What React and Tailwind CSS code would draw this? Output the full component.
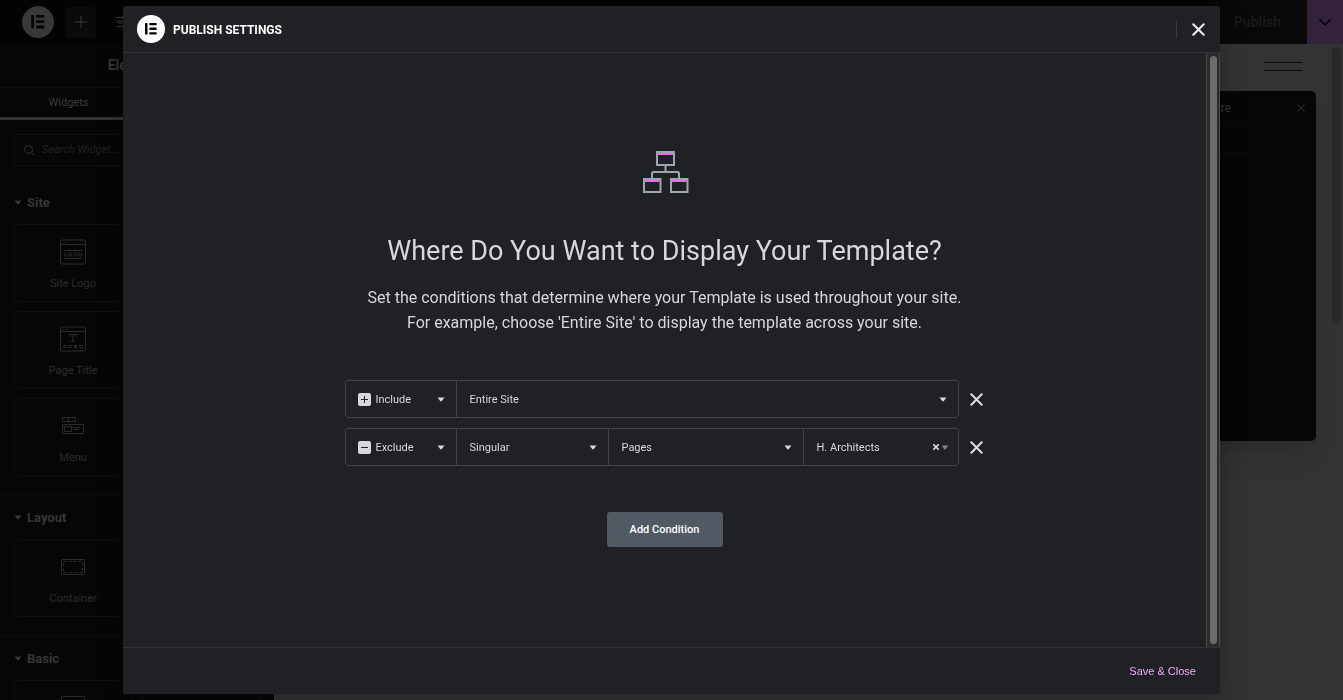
import { useState } from 'react';

// Widget glyphs for the left panel
function LogoWidgetIcon() {
  return (
    <svg width="26" height="26" viewBox="0 0 26 26" fill="none" stroke="currentColor">
      <rect x="0.5" y="1" width="25" height="24" rx="2" />
      <path d="M0.5 5.5h25M2.5 3.5h1M5 3.5h1M7 3.5h1M4 11.5h18M4 19.5h18" />
      <path d="M5 13.5v3.5h2.5" />
      <circle cx="10" cy="15.5" r="1.75" />
      <path d="M16.500 14a1.750 1.750 0 1 0 .3 2.500v-1h-1" />
      <circle cx="20" cy="15.5" r="1.75" />
    </svg>
  );
}

function TitleWidgetIcon() {
  return (
    <svg width="26" height="26" viewBox="0 0 26 26" fill="none" stroke="currentColor">
      <rect x="0.5" y="1" width="25" height="24" rx="2" />
      <path d="M0.5 5.5h25M2.5 3.5h1M5 3.5h1M7 3.5h1" />
      <path d="M9.500 10.500v-2h7v2M13 8.500v7M11 15.500h4" />
      <path d="M8 19.500h4M8 21.500h4M19 19.500h4M19 21.500h4" />
      <rect x="4" y="19.5" width="2" height="2" />
      <rect x="14.5" y="19.5" width="2" height="2" />
    </svg>
  );
}

function MenuWidgetIcon() {
  return (
    <svg width="26" height="26" viewBox="0 0 26 26" fill="none" stroke="currentColor">
      <path d="M2.500 4.500h13v4h-13zM8.500 4.500v4M2.500 11.500h21v9h-21z" />
      <path d="M4.500 13.500h7v5h-7zM13.500 14.500h7M13.500 16.500h5" />
    </svg>
  );
}

function ContainerIcon() {
  return (
    <svg width="26" height="26" viewBox="0 0 26 26" fill="none" stroke="currentColor">
      <rect x="1.5" y="5.5" width="23" height="15" rx="1" />
      <rect x="3.5" y="7.5" width="19" height="11" strokeDasharray="3 2" />
    </svg>
  );
}

function HeadingIcon() {
  return (
    <svg width="26" height="26" viewBox="0 0 26 26" fill="none" stroke="currentColor">
      <rect x="1.5" y="1.5" width="23" height="23" rx="1" />
      <path d="M9 8v10M17 8v10M9 13h8" />
    </svg>
  );
}

const SECTIONS = [
  {
    title: 'Site',
    widgets: [
      { id: 'site-logo', label: 'Site Logo', Icon: LogoWidgetIcon },
      { id: 'page-title', label: 'Page Title', Icon: TitleWidgetIcon },
      { id: 'menu', label: 'Menu', Icon: MenuWidgetIcon },
    ],
  },
  { title: 'Layout', widgets: [{ id: 'container', label: 'Container', Icon: ContainerIcon }] },
  { title: 'Basic', widgets: [{ id: 'heading', Icon: HeadingIcon }] },
];

function ElementorMark({ className }) {
  return (
    <svg viewBox="0 0 32 32" className={className} aria-hidden="true">
      <circle cx="16" cy="16" r="16" fill="currentColor" />
      <path
        className="fill-[#050505]"
        d="M9.200 9h2.800v13.400H9.200zM14.200 9h8.200v2.800h-8.200zM14.200 14.300h8.200v2.800h-8.200zM14.200 19.600h8.200v2.800h-8.200z"
      />
    </svg>
  );
}

function Caret({ className = '' }) {
  return (
    <svg viewBox="0 0 8 5" className={`h-[5px] w-2 ${className}`} aria-hidden="true">
      <path d="M0.500 0.500h7L4.400 4.400q-.400.400-.800 0z" fill="currentColor" />
    </svg>
  );
}

function Cross({ className = '', strokeWidth = 2 }) {
  return (
    <svg
      viewBox="0 0 12 12"
      className={className}
      fill="none"
      stroke="currentColor"
      strokeWidth={strokeWidth}
      strokeLinecap="round"
      aria-hidden="true"
    >
      <path d="M1.200 1.200l9.600 9.600M10.800 1.200L1.200 10.800" />
    </svg>
  );
}

function TopBar() {
  return (
    <header className="flex h-11 shrink-0 items-stretch justify-between bg-[#020303]">
      <div className="flex items-center pl-[22px] text-[#383838]">
        <button aria-label="Elementor menu">
          <ElementorMark className="size-8" />
        </button>
        <button aria-label="Add element" className="ml-[11px] flex size-[31px] items-center justify-center rounded bg-[#0a0a0a]">
          <svg width="12" height="12" viewBox="0 0 12 12" stroke="currentColor" aria-hidden="true">
            <path d="M6 0v12M0 6h12" />
          </svg>
        </button>
        <button aria-label="Site settings" className="ml-5">
          <svg width="14" height="12" viewBox="0 0 14 12" fill="none" stroke="currentColor" aria-hidden="true">
            <path d="M0 1.500h6M9 1.500h5M0 6h2M6 6h8M0 10.500h6M9 10.500h5" />
            <circle cx="7.5" cy="1.5" r="1.5" />
            <circle cx="4" cy="6" r="1.5" />
            <circle cx="7.5" cy="10.5" r="1.5" />
          </svg>
        </button>
      </div>
      <div className="flex bg-[#080808]">
        <button className="px-[26px] text-[14px] font-bold text-[#191919]">Publish</button>
        <button aria-label="Save options" className="flex w-9 items-center justify-center bg-[#33233a] text-black">
          <svg width="12" height="7" viewBox="0 0 12 7" fill="none" stroke="currentColor" strokeWidth="1.5" aria-hidden="true">
            <path d="M0.500 0.500L6 6l5.500-5.500" />
          </svg>
        </button>
      </div>
    </header>
  );
}

function Sidebar() {
  return (
    <aside className="w-[274px] shrink-0 overflow-hidden bg-[#050707] text-[#343434]">
      <h2 className="flex h-11 items-center justify-center border-b border-[#0c0e0e] text-[14px] font-bold">Elements</h2>
      <div className="grid h-8 grid-cols-2 text-[11px]">
        <button className="border-b-3 border-[#333333] pt-px text-[#3c3c3c]">Widgets</button>
        <button className="pt-px">Globals</button>
      </div>
      <label className="mx-[14px] mt-[14px] flex h-8 items-center gap-[7px] border border-[#0f1111] px-[9px]">
        <svg width="11" height="11" viewBox="0 0 11 11" fill="none" stroke="currentColor" className="shrink-0" aria-hidden="true">
          <circle cx="4.5" cy="4.5" r="4" />
          <path d="M7.500 7.500l3 3" />
        </svg>
        <input
          aria-label="Search widgets"
          placeholder="Search Widget..."
          className="w-full bg-transparent pt-px text-[11px] italic outline-none placeholder:text-[#222222]"
        />
      </label>
      {SECTIONS.map(({ title, widgets }, i) => (
        <section key={title} className={i > 0 ? 'mt-[18px] border-t border-[#0b0d0d]' : 'mt-[14px]'}>
          <button className="flex h-11 items-center gap-[5px] pt-px pl-[14px] text-[13px] font-bold text-[#363636]">
            <Caret />
            {title}
          </button>
          <div className="flex flex-col gap-[9px] px-[14px]">
            {widgets.map(({ id, label, Icon }) => (
              <div key={id} className="grid grid-cols-2 gap-[10px]">
                <div className="flex h-[78px] flex-col items-center justify-between rounded-[3px] border border-[#0e1010] pt-[14px] pb-[10px] text-[11px] leading-[14px] text-[#2c2c2c]">
                  <Icon />
                  {label}
                </div>
                <div className="rounded-[3px] border border-[#0e1010]" />
              </div>
            ))}
          </div>
        </section>
      ))}
    </aside>
  );
}

function Canvas() {
  return (
    <main className="relative flex grow justify-end bg-[#333333]">
      <button aria-label="Site menu" className="mt-[18px] mr-[30px] h-[9px] w-[38px] border-y border-[#0a0a0a]" />
      <div className="w-[11px] shrink-0 pt-[3px]">
        <div className="h-[277px] w-[9px] rounded-full bg-[#282828]" />
      </div>
      {/* Floating navigator */}
      <section className="absolute top-[47px] right-[27px] h-[350px] w-60 rounded-[5px] bg-[#050707] text-[12px] text-[#333333] shadow-xl">
        <div className="flex h-[34px] items-center justify-end gap-[66px] border-b border-[#0a0c0c] pr-[11px]">
          <h2>Structure</h2>
          <button aria-label="Close structure">
            <Cross className="size-2" strokeWidth={1.5} />
          </button>
        </div>
        <div className="h-7 border-b border-[#0a0c0c]" />
      </section>
    </main>
  );
}

function Field({ label, value, options, className, selectClass = 'pl-[13px]', icon, clearable }) {
  return (
    <div className={`relative border-l border-[#3f444b] first:border-l-0 ${className}`}>
      {icon}
      <select
        aria-label={label}
        defaultValue={value}
        className={`h-full w-full appearance-none bg-transparent pt-[2px] text-[11px] text-[#d5d8dc] outline-none ${selectClass}`}
      >
        {options.map((option) => (
          <option key={option}>{option}</option>
        ))}
      </select>
      <span
        className={`pointer-events-none absolute inset-y-0 flex items-center gap-[2px] text-[#d5d8dc] ${clearable ? 'right-[9px]' : 'right-[11px]'}`}
      >
        {clearable && <Cross className="size-[6px]" strokeWidth={3} />}
        <Caret className={clearable ? 'text-[#7d8084]' : ''} />
      </span>
    </div>
  );
}

function TypeIcon({ exclude }) {
  return (
    <svg width="13" height="13" viewBox="0 0 13 13" className="pointer-events-none absolute inset-y-0 left-3 my-auto" aria-hidden="true">
      <rect width="13" height="13" rx="2" fill="#d5d8dc" />
      <path d={exclude ? 'M3 6.5h7' : 'M3 6.5h7M6.5 3v7'} stroke="#1f2124" />
    </svg>
  );
}

const CONDITIONS = [
  {
    id: 1,
    type: 'Include',
    fields: [{ label: 'Location', value: 'Entire Site', options: ['Entire Site', 'Archives', 'Singular'], className: 'grow' }],
  },
  {
    id: 2,
    type: 'Exclude',
    fields: [
      { label: 'Location', value: 'Singular', options: ['Entire Site', 'Archives', 'Singular'], className: 'w-[152px]' },
      { label: 'Content type', value: 'Pages', options: ['Pages', 'Posts'], className: 'w-[195px]' },
      { label: 'Page', value: 'H. Architects', options: ['H. Architects'], className: 'grow', clearable: true },
    ],
  },
];

function ConditionRow({ condition, onRemove }) {
  return (
    <div className="flex w-full items-center gap-[11px]">
      <div className="flex h-[38px] w-[614px] rounded-[3px] border border-[#3f444b]">
        <Field
          label="Condition type"
          value={condition.type}
          options={['Include', 'Exclude']}
          className="w-[110px]"
          selectClass="pl-[30px]"
          icon={<TypeIcon exclude={condition.type === 'Exclude'} />}
        />
        {condition.fields.map((field) => (
          <Field key={field.label} {...field} />
        ))}
      </div>
      <button aria-label="Remove condition" onClick={onRemove} className="text-[#d5d8dc]">
        <Cross className="size-[13px]" />
      </button>
    </div>
  );
}

function TemplateTreeIcon() {
  return (
    <svg width="46" height="42" viewBox="-1 0 46 42" fill="none" stroke="#9da5ae" strokeWidth="2" className="overflow-visible" aria-hidden="true">
      <path d="M14 1h17v13H14zM1 28h16.500v13H1zM28 28h16.500v13H28z" />
      <path d="M22.500 14v7M9 28v-5.500q0-1.500 1.500-1.500h24q1.500 0 1.500 1.500V28" />
      <path d="M15 3h15M2 30h14.500M29 30h14.500" stroke="#e86bf5" />
    </svg>
  );
}

function PublishModal() {
  const [conditions, setConditions] = useState(CONDITIONS);

  const removeCondition = (id) => setConditions(conditions.filter((c) => c.id !== id));
  const addCondition = () => setConditions([...conditions, { ...CONDITIONS[0], id: Date.now() }]);

  return (
    <div className="fixed inset-0 flex justify-center py-[6px]">
      <div
        role="dialog"
        aria-label="Publish Settings"
        className="flex w-full max-w-[1097px] flex-col rounded-[3px] bg-[#1f2124] shadow-[2px_8px_23px_3px_rgba(0,0,0,0.2)]"
      >
        <header className="flex h-[47px] shrink-0 items-center justify-between border-b border-[#303236] pr-[15px] pl-[14px]">
          <div className="flex items-center gap-2">
            <ElementorMark className="size-7 text-white" />
            <h1 className="pt-px text-[12px] font-bold text-white uppercase">Publish Settings</h1>
          </div>
          <div className="border-l border-[#3a3c40] py-[2px] pl-[15px]">
            <button aria-label="Close" className="flex text-[#e6e9ec]">
              <Cross className="size-[13px]" />
            </button>
          </div>
        </header>

        <div className="flex min-h-0 grow">
          <div className="flex min-w-0 grow flex-col items-center overflow-hidden pt-[98px]">
            <TemplateTreeIcon />
            <h2 className="mt-10 text-[27px] leading-9 text-[#d5d8dc]">Where Do You Want to Display Your Template?</h2>
            <p className="mt-4 text-center text-[16px] leading-[25px] text-[#d5d8dc]">
              Set the conditions that determine where your Template is used throughout your site.
              <br />
              For example, choose 'Entire Site' to display the template across your site.
            </p>
            <div className="mt-[45px] flex w-full max-w-[640px] flex-col gap-[10px]">
              {conditions.map((c) => (
                <ConditionRow key={c.id} condition={c} onRemove={() => removeCondition(c.id)} />
              ))}
            </div>
            <button onClick={addCondition} className="mt-[46px] h-[35px] w-[116px] rounded-[3px] bg-[#515962] pt-px text-[11px] font-medium text-white">
              Add Condition
            </button>
          </div>
          {/* Scroll track */}
          <div className="flex w-[14px] shrink-0 justify-center border-x border-[#4a4a4a] bg-[#2b2b2b] py-[3px]">
            <div className="w-[7px] rounded-full bg-[#6b6b6b]" />
          </div>
        </div>

        <footer className="flex h-[47px] shrink-0 items-center justify-end border-t border-[#303236] pr-6">
          <button className="pt-px font-['Liberation_Sans',sans-serif] text-[11px] text-[#f0abfc]">Save &amp; Close</button>
        </footer>
      </div>
    </div>
  );
}

export default function App() {
  return (
    <div className="flex h-screen flex-col overflow-hidden font-[Roboto,sans-serif]">
      <TopBar />
      <div className="flex min-h-0 grow">
        <Sidebar />
        <Canvas />
      </div>
      <PublishModal />
    </div>
  );
}
